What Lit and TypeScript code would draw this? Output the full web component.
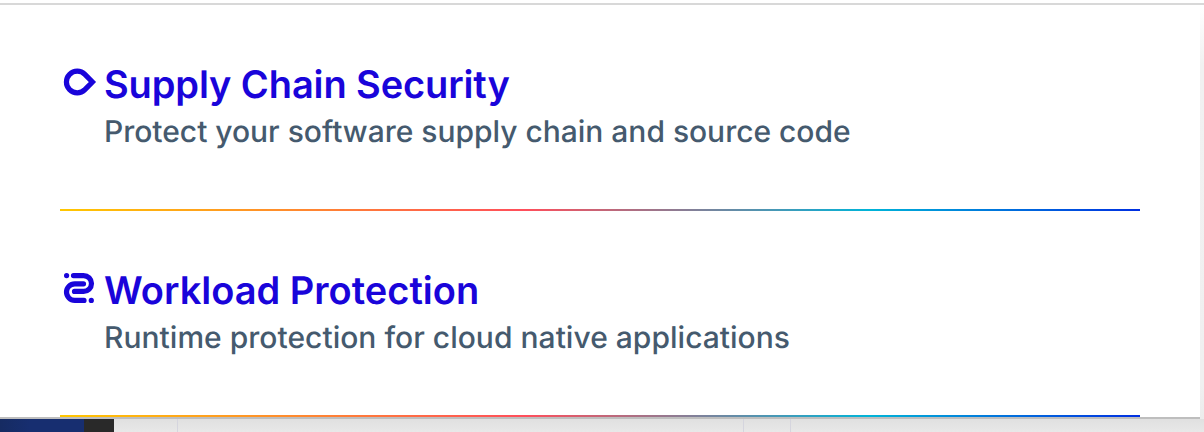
import { LitElement, html, css, svg } from "lit";
import { customElement } from "lit/decorators.js";

const drop = svg`<path d="M24.9 8.4A10.8 10.8 0 1 0 24.9 23.6L32.4 16Z" stroke-width="5.2" stroke-linejoin="miter"/>`;
const coil = svg`<g transform="translate(-60 -272)" stroke-width="5.2" stroke-linecap="round">
  <path d="M73.5 275.6H83.6a7.9 7.9 0 0 1 0 15.8H74.5"/>
  <path d="M83.5 283.8H74.8a8.3 8.3 0 0 0 0 16.6H84"/>
  <circle cx="66.6" cy="275.6" r="2.6" fill="#1904da" stroke="none"/>
  <circle cx="91.3" cy="300.4" r="2.6" fill="#1904da" stroke="none"/></g>`;

@customElement("app-root")
export class AppRoot extends LitElement {
  static styles = css`
    :host { display: block; height: 432px; overflow: hidden; background: #fff; font-family: Inter, sans-serif; text-rendering: geometricPrecision; }
    .page { display: grid; grid-template-rows: 3px 2px 414px 13px; }
    .rule { background: #d8d8d8; }
    .body { display: grid; grid-template-columns: 1200px 4px; }
    .menu { box-sizing: border-box; padding: 0 60px; border-bottom: 2px solid #bebebe; background: #fff; }
    .edge { background: linear-gradient(#fff, #f1f1f1 60px, #f0f0f0 380px, #ececec); }
    .item { box-sizing: border-box; height: 206px; padding-top: 59px; display: grid; grid-template-columns: 44px 1fr; grid-template-rows: 42px 1fr 2px; }
    .icon { width: 40px; height: 36px; fill: none; stroke: #1904da; margin-top: 2px; }
    .title { margin: 0; font-size: 38px; line-height: 42px; font-weight: 600; color: #1904da; white-space: nowrap; }
    .item:first-child .title { letter-spacing: -0.11px; }
    .desc { margin: 0; grid-column: 2; font-size: 30px; line-height: 36px; padding-top: 8px; color: #455a6e; white-space: nowrap; font-weight: 500; letter-spacing: 0.02px; }
    .item:first-child .desc { letter-spacing: -0.02px; }
    .line { grid-column: 1 / 3; background: linear-gradient(90deg, #ffc700, #ff4e5b 43%, #00b4d8 75%, #002fe1); }
    .under { display: grid; grid-template-columns: 84px 30px 63px 1px 565px 1px 46px 1px 1fr; background: linear-gradient(#e0e0e0, #e8e8e8); }
    .navy { background: linear-gradient(90deg, #162b62, #172e70 30px); }
    .dark { background: #292929; }
    .seam { background: #d5d5de; }
  `;

  private item(icon: unknown, title: string, desc: string) {
    return html`<section class="item">
      <svg class="icon" viewBox="0 0 40 36">${icon}</svg>
      <h2 class="title">${title}</h2>
      <p class="desc">${desc}</p>
      <div class="line"></div>
    </section>`;
  }

  render() {
    return html`<div class="page">
      <div></div>
      <div class="rule"></div>
      <div class="body">
        <div class="menu">
          ${this.item(drop, "Supply Chain Security", "Protect your software supply chain and source code")}
          ${this.item(coil, "Workload Protection", "Runtime protection for cloud native applications")}
        </div>
        <div class="edge"></div>
      </div>
      <div class="under">
        <div class="navy"></div><div class="dark"></div><div></div><div class="seam"></div>
        <div></div><div class="seam"></div><div></div><div class="seam"></div><div></div>
      </div>
    </div>`;
  }
}
